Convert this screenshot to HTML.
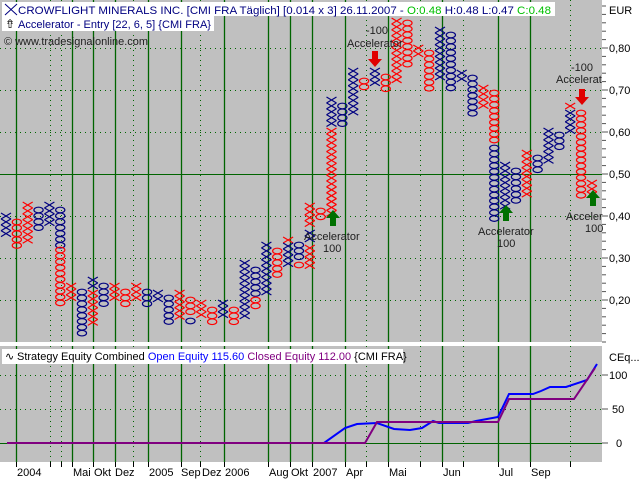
<!DOCTYPE html>
<html><head><meta charset="utf-8"><style>
body{margin:0;width:640px;height:480px;overflow:hidden;background:#fff;font-family:"Liberation Sans",sans-serif;}
svg{position:absolute;left:0;top:0}
</style></head><body>
<svg id="s" width="640" height="480" xmlns="http://www.w3.org/2000/svg" font-family="Liberation Sans, sans-serif" font-size="11">
<rect x="0" y="0" width="640" height="480" fill="#fff"/>
<rect x="0" y="0" width="602" height="342" fill="#c0c0c0"/>
<rect x="0" y="346" width="602" height="116" fill="#c0c0c0"/>
<g id="grid"></g>
<g id="pf"></g>
<!-- header -->
<rect x="2" y="2" width="553" height="14" fill="#fff"/>
<rect x="2" y="16" width="212" height="15" fill="#fff"/>
<path d="M5 4 L17 15 M17 4 L5 15" stroke="#000080" stroke-width="1"/>
<text x="18" y="14" fill="#000080" textLength="533" lengthAdjust="spacingAndGlyphs">CROWFLIGHT MINERALS INC. [CMI FRA  Täglich] [0.014 x 3] 26.11.2007 - <tspan fill="#00c000">O:0.48</tspan> H:0.48 L:0.47 <tspan fill="#00c000">C:0.48</tspan></text>
<text x="5" y="28" fill="#000" font-size="12">⇮</text>
<text x="18" y="28" fill="#000080" textLength="193" lengthAdjust="spacingAndGlyphs">Accelerator - Entry [22, 6, 5] {CMI FRA}</text>
<text x="4" y="45" fill="#202020" textLength="144" lengthAdjust="spacingAndGlyphs">© www.tradesignalonline.com</text>
<!-- annotations -->
<g fill="#202020">
<text x="366" y="34">-100</text><text x="347" y="47">Accelerator</text>
<text x="304" y="240">Accelerator</text><text x="323" y="252">100</text>
<text x="478" y="235">Accelerator</text><text x="497" y="247">100</text>
<text x="571" y="71">-100</text><text x="556" y="83">Accelerat</text>
<text x="566" y="220">Acceler</text><text x="585" y="232">100</text>
</g>
<g fill="#e00000"><path d="M372 51h6v8h4l-7 8l-7-8h4z"/><path d="M579 89h6v8h4l-7 8l-7-8h4z"/></g>
<g fill="#007000"><path d="M330 226h6v-8h4l-7-8l-7 8h4z"/><path d="M503 221h6v-8h4l-7-8l-7 8h4z"/><path d="M590 206h6v-8h4l-7-8l-7 8h4z"/></g>
<!-- right axis -->
<g fill="#000"><text x="609" y="14">EUR</text>
<text x="609" y="52">0,80</text><text x="609" y="94">0,70</text><text x="609" y="136">0,60</text><text x="609" y="178">0,50</text><text x="609" y="220">0,40</text><text x="609" y="262">0,30</text><text x="609" y="304">0,20</text>
<text x="609" y="361">CEq...</text><text x="609" y="379">100</text><text x="612" y="413">50</text><text x="616" y="447">0</text></g>
<g id="ticks" stroke="#555"></g>
<!-- lower panel -->
<rect x="2" y="349" width="401" height="15" fill="#fff"/>
<text x="5" y="360" fill="#000">∿</text>
<text x="17" y="360" fill="#000">Strategy Equity Combined <tspan fill="#0000ff">Open Equity 115.60</tspan> <tspan fill="#800080">Closed Equity 112.00</tspan> {CMI FRA}</text>
<polyline fill="none" stroke="#0000ff" stroke-width="2" points="7,443 324,443 345,428 357,424 377,423 394,429 410,430 422,428 433,421 439,423 468,423 476,421 498,417 509,394 533,394 541,391 550,387 566,387 587,380 597,364"/>
<polyline fill="none" stroke="#800080" stroke-width="2" points="7,443 365,443 377,422 498,422 509,399 574,399 595,368"/>
<!-- time axis -->
<g fill="#000"><text x="17" y="476">2004</text><text x="73" y="476">Mai</text><text x="94" y="476">Okt</text><text x="115" y="476">Dez</text><text x="149" y="476">2005</text><text x="181" y="476">Sep</text><text x="202" y="476">Dez</text><text x="225" y="476">2006</text><text x="269" y="476">Aug</text><text x="291" y="476">Okt</text><text x="313" y="476">2007</text><text x="346" y="476">Apr</text><text x="389" y="476">Mai</text><text x="443" y="476">Jun</text><text x="499" y="476">Jul</text><text x="531" y="476">Sep</text></g>
</svg>
<script>
var NS="http://www.w3.org/2000/svg";
function el(p,t,a){var e=document.createElementNS(NS,t);for(var k in a)e.setAttribute(k,a[k]);p.appendChild(e);return e;}
var g=document.getElementById('grid');
var solid=[16,72,93,115,148,181,224,268,290,312,345,388,442,498,530];
var dotted=[50,61,133,200,366,420,463,570];
solid.forEach(function(x){el(g,'line',{x1:x+.5,y1:0,x2:x+.5,y2:342,stroke:'#006400','stroke-width':1.3});el(g,'line',{x1:x+.5,y1:346,x2:x+.5,y2:462,stroke:'#006400','stroke-width':1.3});el(g,'line',{x1:x+.5,y1:462,x2:x+.5,y2:467,stroke:'#000'});});
dotted.forEach(function(x){el(g,'line',{x1:x+.5,y1:0,x2:x+.5,y2:342,stroke:'#006400','stroke-dasharray':'1 4'});el(g,'line',{x1:x+.5,y1:346,x2:x+.5,y2:462,stroke:'#006400','stroke-dasharray':'1 4'});el(g,'line',{x1:x+.5,y1:462,x2:x+.5,y2:467,stroke:'#000'});});
[48,90,132,216,258,300].forEach(function(y){el(g,'line',{x1:0,y1:y+.5,x2:602,y2:y+.5,stroke:'#006400','stroke-dasharray':'1 4'});});
el(g,'line',{x1:0,y1:174.5,x2:602,y2:174.5,stroke:'#006400','stroke-width':1});
[375,409].forEach(function(y){el(g,'line',{x1:0,y1:y+.5,x2:602,y2:y+.5,stroke:'#006400','stroke-dasharray':'1 4'});});
el(g,'line',{x1:0,y1:443.5,x2:602,y2:443.5,stroke:'#006400','stroke-width':1});
var tk=document.getElementById('ticks');
for(var y=6;y<342;y+=8.4){el(tk,'line',{x1:602,y1:y,x2:606,y2:y});}
[48,90,132,174,216,258,300].forEach(function(y){el(tk,'line',{x1:602,y1:y,x2:608,y2:y});});
[375,409,443].forEach(function(y){el(tk,'line',{x1:602,y1:y,x2:608,y2:y});});
var R='#ff0000',B='#000080';
var cols=[
['X',[[B,213,235]]],['O',[[R,219,248]]],['X',[[R,202,242]]],['O',[[B,207,232]]],['X',[[B,202,224]]],
['O',[[B,207,247],[R,247,307]]],['X',[[R,283,300]]],['O',[[B,289,335]]],['X',[[B,277,290],[R,290,327]]],['O',[[B,283,307]]],
['X',[[R,283,300]]],['O',[[R,289,307]]],['X',[[R,283,300]]],['O',[[B,289,307]]],['X',[[B,290,302]]],
['O',[[B,295,327]]],['X',[[R,290,320]]],['O',[[R,297,318],[B,318,325]]],['X',[[R,300,317]]],['O',[[R,307,325]]],
['X',[[B,300,317]]],['O',[[R,307,325]]],['X',[[B,260,317]]],['O',[[B,267,297],[R,297,307]]],['X',[[B,242,298]]],
['O',[[R,248,277]]],['X',[[R,237,243],[B,243,270]]],['O',[[B,242,262],[R,262,270]]],['X',[[R,203,230],[B,230,245],[R,245,270]]],['O',[[R,208,218]]],
['X',[[B,97,128],[R,128,215]]],['O',[[B,103,125]]],['X',[[B,68,117]]],['O',[[R,78,90]]],['X',[[B,68,85]]],
['O',[[R,74,90]]],['X',[[R,18,83]]],['O',[[R,20,67]]],['X',[[R,45,60]]],['O',[[R,50,90]]],
['X',[[B,27,80]]],['O',[[B,32,90]]],['X',[[B,70,85]]],['O',[[B,75,120]]],['X',[[R,85,110]]],
['O',[[R,90,145],[B,145,222]]],['X',[[B,162,213]]],['O',[[B,168,205]]],['X',[[R,150,200]]],['O',[[B,155,175]]],
['X',[[B,128,165]]],['O',[[B,132,148]]],['X',[[R,103,110],[B,110,135]]],['O',[[R,110,200]]],['X',[[R,180,200]]]
];
var pf=document.getElementById('pf');
cols.forEach(function(c,i){
  var cx=6+i*10.85;
  c[1].forEach(function(s){
    for(var y=s[1]+3;y<=s[2]-1;y+=5.88){
      if(c[0]=='X'){el(pf,'path',{d:'M'+(cx-5)+' '+(y-3)+'L'+(cx+5)+' '+(y+3)+'M'+(cx+5)+' '+(y-3)+'L'+(cx-5)+' '+(y+3),stroke:s[0],'stroke-width':1.2,fill:'none'});}
      else{el(pf,'ellipse',{cx:cx,cy:y,rx:4.6,ry:2.8,stroke:s[0],'stroke-width':1.2,fill:'none'});}
    }
  });
});
</script>
</body></html>
